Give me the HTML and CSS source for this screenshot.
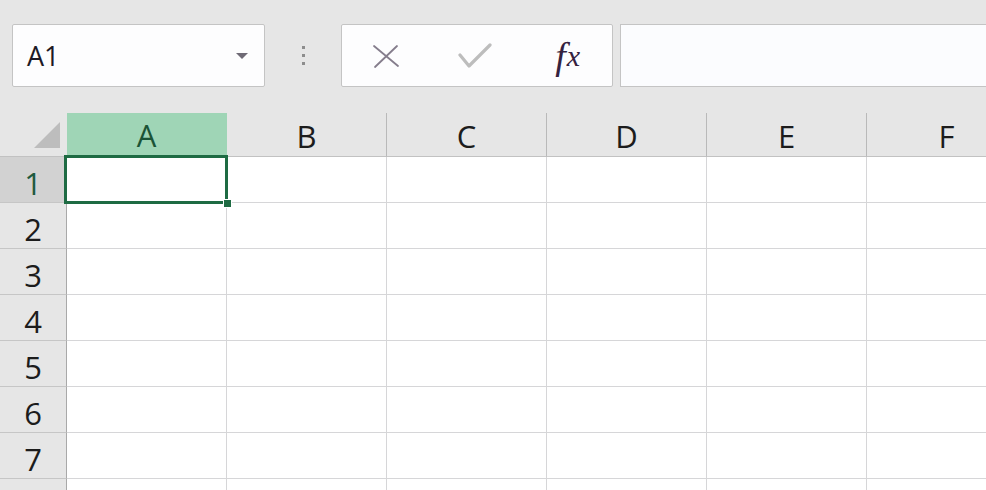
FILE: index.html
```html
<!DOCTYPE html>
<html lang="en">
<head>
    <meta charset="UTF-8">
    <meta name="viewport" content="width=device-width, initial-scale=1.0">
    <title>Sheet</title>
    <link rel="stylesheet" href="styles.css">
</head>
<body>
    <div class="toolbar">
        <div class="namebox">
            <span class="cellref">A1</span>
            <span class="caret"></span>
        </div>
        <div class="grip"><i></i><i></i><i></i></div>
        <div class="fbuttons">
            <span class="fbtn">
                <svg width="28" height="26" viewBox="0 0 28 26">
                    <path d="M2 3 L26 23 M25 3 L3 24" stroke="#857d8c" stroke-width="1.8" fill="none" stroke-linecap="round"/>
                </svg>
            </span>
            <span class="fbtn">
                <svg width="34" height="28" viewBox="0 0 34 28">
                    <path d="M2 13 L11 24 L32 3" stroke="#bdbdbd" stroke-width="3.2" fill="none" stroke-linecap="round" stroke-linejoin="round"/>
                </svg>
            </span>
            <span class="fbtn fx">f<span class="fx-x">x</span></span>
        </div>
        <div class="formula"></div>
    </div>

    <div class="sheet">
        <div class="corner">
            <svg width="26" height="26" viewBox="0 0 26 26"><polygon points="26,0 26,26 0,26" fill="#bdbdbd"/></svg>
        </div>
        <div class="colhead active">A</div>
        <div class="colhead">B</div>
        <div class="colhead">C</div>
        <div class="colhead">D</div>
        <div class="colhead">E</div>
        <div class="colhead">F</div>

        <div class="rowhead active">1</div>
        <div class="cell selected"><span class="selbox"><span class="handle"></span></span></div>
        <div class="cell"></div><div class="cell"></div><div class="cell"></div><div class="cell"></div><div class="cell"></div>

        <div class="rowhead">2</div>
        <div class="cell"></div><div class="cell"></div><div class="cell"></div><div class="cell"></div><div class="cell"></div><div class="cell"></div>

        <div class="rowhead">3</div>
        <div class="cell"></div><div class="cell"></div><div class="cell"></div><div class="cell"></div><div class="cell"></div><div class="cell"></div>

        <div class="rowhead">4</div>
        <div class="cell"></div><div class="cell"></div><div class="cell"></div><div class="cell"></div><div class="cell"></div><div class="cell"></div>

        <div class="rowhead">5</div>
        <div class="cell"></div><div class="cell"></div><div class="cell"></div><div class="cell"></div><div class="cell"></div><div class="cell"></div>

        <div class="rowhead">6</div>
        <div class="cell"></div><div class="cell"></div><div class="cell"></div><div class="cell"></div><div class="cell"></div><div class="cell"></div>

        <div class="rowhead">7</div>
        <div class="cell"></div><div class="cell"></div><div class="cell"></div><div class="cell"></div><div class="cell"></div><div class="cell"></div>

        <div class="rowhead"></div>
        <div class="cell"></div><div class="cell"></div><div class="cell"></div><div class="cell"></div><div class="cell"></div><div class="cell"></div>
    </div>
</body>
</html>
```

FILE: styles.css
```css
body {
    margin: 0;
    padding: 0;
    background-color: #e6e6e6;
    font-family: "Open Sans", "Liberation Sans", sans-serif;
    color: #222;
    overflow: hidden;
    width: 986px;
    height: 490px;
}

.toolbar {
    display: flex;
    align-items: center;
    height: 113px;
    box-sizing: border-box;
    padding: 24px 0 26px 12px;
    white-space: nowrap;
}

.namebox {
    width: 253px;
    height: 63px;
    box-sizing: border-box;
    background: #fdfdfe;
    border: 1px solid #c4c4c4;
    border-radius: 2px;
    display: flex;
    align-items: center;
    justify-content: space-between;
    padding: 0 16px 0 14px;
    flex-shrink: 0;
}

.cellref {
    font-size: 27px;
    color: #1e1a26;
}

.caret {
    width: 0;
    height: 0;
    border-left: 6px solid transparent;
    border-right: 6px solid transparent;
    border-top: 6px solid #6f6a75;
}

.grip {
    width: 76px;
    display: flex;
    flex-direction: column;
    align-items: center;
    gap: 5px;
    flex-shrink: 0;
}

.grip i {
    width: 3px;
    height: 3px;
    background: #8d8d8d;
}

.fbuttons {
    width: 272px;
    height: 63px;
    box-sizing: border-box;
    background: #fdfdfe;
    border: 1px solid #c4c4c4;
    border-radius: 2px;
    display: flex;
    align-items: center;
    flex-shrink: 0;
}

.fbtn {
    width: 90px;
    display: flex;
    justify-content: center;
    align-items: center;
}

.fx {
    font-family: "Liberation Serif", "DejaVu Serif", serif;
    font-style: italic;
    font-size: 38px;
    color: #35223f;
    margin-left: 4px;
    line-height: 1;
}

.fx-x {
    font-size: 30px;
    margin-left: 1px;
    vertical-align: -2px;
}

.formula {
    margin-left: 7px;
    width: 400px;
    height: 63px;
    box-sizing: border-box;
    background: #fbfcfe;
    border: 1px solid #c4c4c4;
    flex-shrink: 0;
}

.sheet {
    display: grid;
    grid-template-columns: 67px repeat(6, 160px);
    grid-template-rows: 44px repeat(8, 46px);
    background: #fff;
}

.corner {
    background: #e6e6e6;
    border-bottom: 1px solid #c2c2c2;
    display: flex;
    justify-content: flex-end;
    align-items: flex-end;
    padding: 0 7px 8px 0;
}

.colhead {
    background: #e6e6e6;
    border-right: 1px solid #b9b9b9;
    border-bottom: 1px solid #c2c2c2;
    box-sizing: border-box;
    display: flex;
    justify-content: center;
    align-items: flex-end;
    font-size: 31px;
    line-height: 1;
    padding-bottom: 4px;
    color: #1c1c1c;
}

.colhead.active {
    background: #9fd5b6;
    color: #1b5436;
    border-right-color: #9fd5b6;
    border-bottom: 2px solid #1e6b43;
}

.rowhead {
    background: #e6e6e6;
    border-right: 1px solid #a9a9a9;
    border-bottom: 1px solid #c6c6c6;
    box-sizing: border-box;
    display: flex;
    justify-content: center;
    align-items: center;
    padding-top: 7px;
    font-size: 31px;
    line-height: 1;
    color: #1c1c1c;
}

.rowhead.active {
    background: #d2d2d2;
    color: #1e5a3e;
}

.cell {
    border-right: 1px solid #d6d6d8;
    border-bottom: 1px solid #d6d6d8;
    box-sizing: border-box;
    background: #fff;
}

.cell.selected {
    position: relative;
}

.selbox {
    position: absolute;
    top: -2px;
    left: -3px;
    right: -2px;
    bottom: -2px;
    border: 3px solid #1e6b43;
}

.handle {
    position: absolute;
    right: -7px;
    bottom: -7px;
    width: 7px;
    height: 7px;
    background: #1e6b43;
    border: 1px solid #fff;
}
```
